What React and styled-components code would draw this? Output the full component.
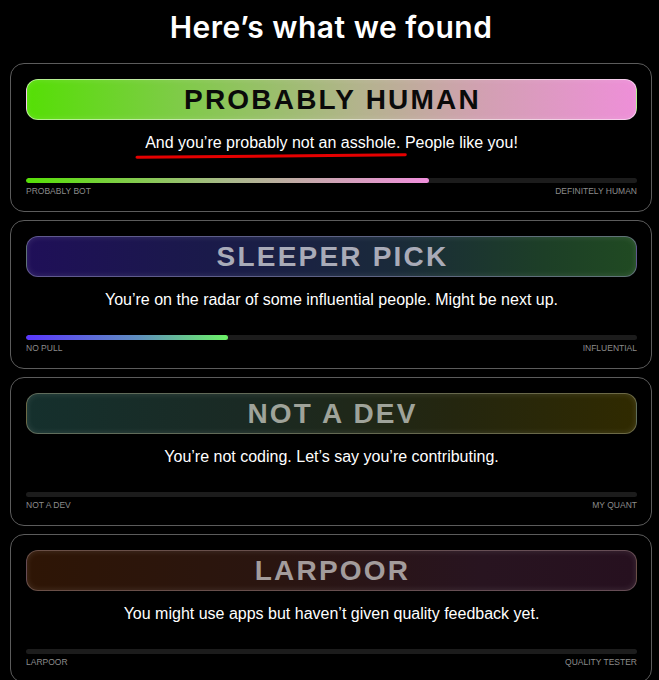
import styled, { createGlobalStyle } from "styled-components";

const GlobalStyle = createGlobalStyle`
    html, body {
        margin: 0;
        padding: 0;
        background: #000;
    }
    body {
        font-family: "Liberation Sans", Arial, sans-serif;
        color: #fff;
    }
    * { box-sizing: border-box; }
`;

const results = [
    {
        title: "PROBABLY HUMAN",
        pill: "linear-gradient(90deg, #55df05 0%, #7fcb48 25%, #b4b38e 55%, #d2a0b2 75%, #ee8fd8 100%)",
        edge: "rgba(255,255,255,0.55)",
        ink: "#0a0a0a",
        bar: "linear-gradient(90deg, #57e007 0%, #a9b98a 50%, #f08fdc 100%)",
        fill: 66,
        low: "PROBABLY BOT",
        high: "DEFINITELY HUMAN",
        marked: true,
    },
    {
        title: "SLEEPER PICK",
        pill: "linear-gradient(90deg, #1f0f58 0%, #1a1a4a 30%, #1a2a3a 60%, #1d3f27 85%, #204a22 100%)",
        edge: "rgba(150,150,190,0.55)",
        ink: "#a9abb8",
        bar: "linear-gradient(90deg, #5a37ff 0%, #5f8ec0 55%, #6cf266 100%)",
        fill: 33,
        low: "NO PULL",
        high: "INFLUENTIAL",
        text: "You’re on the radar of some influential people. Might be next up.",
    },
    {
        title: "NOT A DEV",
        pill: "linear-gradient(90deg, #15302d 0%, #1a2a24 35%, #24260f 70%, #302a00 100%)",
        edge: "rgba(170,170,140,0.5)",
        ink: "#9fa39a",
        bar: "none",
        fill: 0,
        low: "NOT A DEV",
        high: "MY QUANT",
        text: "You’re not coding. Let’s say you’re contributing.",
    },
    {
        title: "LARPOOR",
        pill: "linear-gradient(90deg, #2e1505 0%, #2a1510 40%, #281420 75%, #26101f 100%)",
        edge: "rgba(180,150,150,0.45)",
        ink: "#a39c9c",
        bar: "none",
        fill: 0,
        low: "LARPOOR",
        high: "QUALITY TESTER",
        text: "You might use apps but haven’t given quality feedback yet.",
    },
];

export default function App() {
    return (
        <>
            <GlobalStyle />
            <Page>
                <Heading>Here’s what we found</Heading>
                <CardList>
                    {results.map((r) => (
                        <Card key={r.title}>
                            <Pill $bg={r.pill} $edge={r.edge} $ink={r.ink}>
                                {r.title}
                            </Pill>
                            <Message>
                                {r.marked ? (
                                    <>
                                        <Marked>
                                            And you’re probably not an asshole.
                                            <Scribble viewBox="0 0 272 6" preserveAspectRatio="none">
                                                <path d="M2 4.2 Q 136 2.6 270 1.8" stroke="#e60000" strokeWidth="3" fill="none" strokeLinecap="round" />
                                            </Scribble>
                                        </Marked>{" "}
                                        People like you!
                                    </>
                                ) : (
                                    r.text
                                )}
                            </Message>
                            <Track>
                                {/* width comes from the score */}
                                <Fill $bg={r.bar} style={{ width: `${r.fill}%` }} />
                            </Track>
                            <Scale>
                                <span>{r.low}</span>
                                <span>{r.high}</span>
                            </Scale>
                        </Card>
                    ))}
                </CardList>
            </Page>
        </>
    );
}

const Page = styled.div`
    width: 100vw;
    min-height: 100vh;
    background: #000;
    padding: 0 7px 0 10px;
    display: flex;
    flex-direction: column;
`;

const Heading = styled.h1`
    margin: 9px 0 0;
    height: 54px;
    text-align: center;
    font-family: Inter, "Noto Sans", sans-serif;
    font-weight: 600;
    font-size: 30px;
    line-height: 36px;
    letter-spacing: 0.5px;
    color: #fff;
`;

const CardList = styled.div`
    display: flex;
    flex-direction: column;
    gap: 8px;
`;

const Card = styled.section`
    border: 1px solid #5c5c5c;
    border-radius: 14px;
    padding: 15px 14px 15px 15px;
    display: flex;
    flex-direction: column;
`;

const Pill = styled.div`
    height: 41px;
    border-radius: 12px;
    background: ${(p) => p.$bg};
    border: 1px solid ${(p) => p.$edge};
    box-shadow: inset 0 0 6px rgba(255, 255, 255, 0.12);
    display: flex;
    align-items: center;
    justify-content: center;
    color: ${(p) => p.$ink};
    font-family: "Liberation Sans", Arial, sans-serif;
    font-weight: 700;
    font-size: 28px;
    letter-spacing: 2.2px;
    padding-left: 2px;
`;

const Message = styled.p`
    margin: 13px 0 0;
    text-align: center;
    font-size: 16px;
    line-height: 20px;
    color: #fff;
`;

const Marked = styled.span`
    position: relative;
`;

const Scribble = styled.svg`
    position: absolute;
    left: -10px;
    bottom: -8px;
    width: calc(100% + 17px);
    height: 6px;
    overflow: visible;
`;

const Track = styled.div`
    margin-top: 25px;
    height: 5px;
    border-radius: 3px;
    background: #1c1c1c;
    overflow: hidden;
`;

const Fill = styled.div`
    height: 100%;
    border-radius: 3px;
    background: ${(p) => p.$bg};
`;

const Scale = styled.div`
    margin-top: 3px;
    display: flex;
    justify-content: space-between;
    font-size: 8.5px;
    line-height: 10px;
    color: #8c8c8c;
`;
